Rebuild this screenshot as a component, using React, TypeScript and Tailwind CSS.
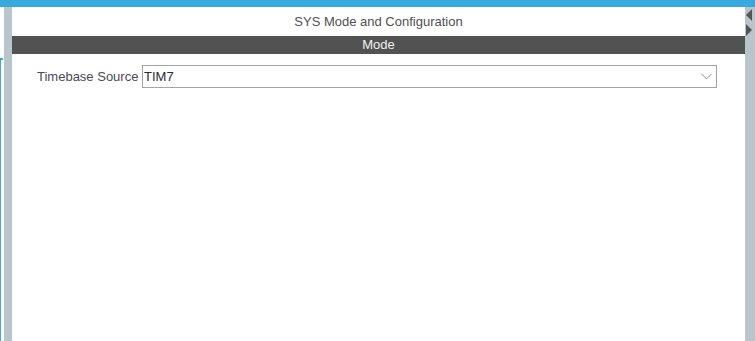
import { ChevronDown } from "lucide-react";

export default function App() {
  return (
    <div
      className="flex h-[341px] w-[755px] flex-col overflow-hidden bg-white text-[13px]"
      style={{ fontFamily: '"Liberation Sans", Arial, sans-serif' }}
    >
      {/* top accent bar */}
      <div className="h-[7px] shrink-0 bg-[#37a9dd]" />

      <div className="flex min-h-0 flex-1">
        {/* left edge */}
        <div className="flex w-[4px] shrink-0 flex-col bg-white">
          <div className="mt-[51px] w-[3px] flex-1 border-l border-t-2 border-[#37a9dd]" />
        </div>
        <div className="w-[8px] shrink-0 bg-[#bac5cb]" />

        {/* panel */}
        <div className="flex min-w-0 flex-1 flex-col bg-white">
          <div className="flex h-[29px] items-center justify-center text-[#505050]">
            SYS Mode and Configuration
          </div>
          <div className="flex h-[18px] items-center justify-center bg-[#515352] text-[#f2f2f2]">
            Mode
          </div>

          <div className="flex items-center pl-[25px] pr-[28px] pt-[11px]">
            <span className="w-[105px] shrink-0 text-[#4a4a58]">Timebase Source</span>
            <div className="flex h-[23px] flex-1 items-center justify-between border border-[#a3a3a3] pl-[1px] text-[#2a2a3a]">
              <span>TIM7</span>
              <ChevronDown className="h-[19px] w-[19px] text-[#7a7a7a]" strokeWidth={1.1} />
            </div>
          </div>
        </div>

        {/* right collapse strip */}
        <div className="flex w-[10px] shrink-0 flex-col items-start bg-[#bac5cb] pl-[1px] pt-[2px]">
          <svg width="7" height="12" viewBox="0 0 7 12">
            <path d="M0 6 L6 0 L6 12 Z" fill="#555" />
          </svg>
          <svg width="7" height="12" viewBox="0 0 7 12" className="mt-[3px]">
            <path d="M0 0 L6 6 L0 12 Z" fill="#555" />
          </svg>
        </div>
      </div>
    </div>
  );
}
